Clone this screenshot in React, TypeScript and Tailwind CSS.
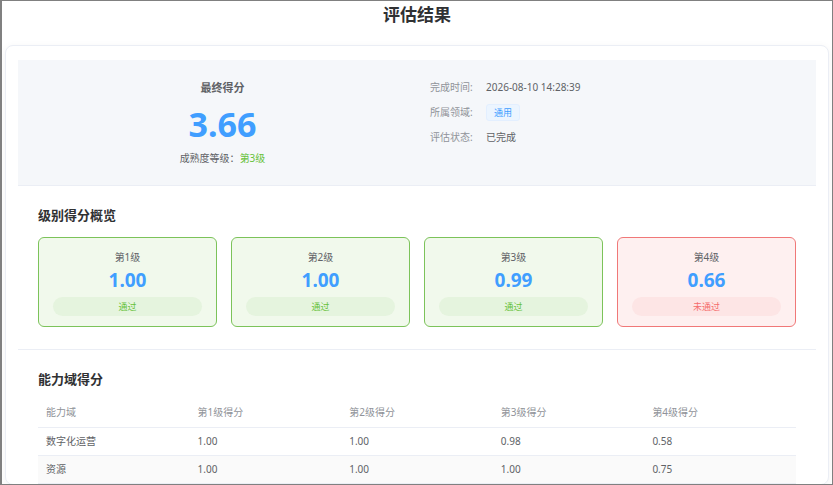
import React from 'react';

const FONT = '"Noto Sans", "Noto Sans CJK SC", sans-serif';

const LEVELS = [
  { name: '第1级', score: '1.00', pass: true },
  { name: '第2级', score: '1.00', pass: true },
  { name: '第3级', score: '0.99', pass: true },
  { name: '第4级', score: '0.66', pass: false },
];

const ROWS = [
  { domain: '数字化运营', s: ['1.00', '1.00', '0.98', '0.58'] },
  { domain: '资源', s: ['1.00', '1.00', '1.00', '0.75'] },
];

function InfoRow({ label, children }: { label: string; children: React.ReactNode }) {
  return (
    <div className="flex h-[25px] items-center">
      <span className="w-[56px] text-[10px] text-[#909399]">{label}</span>
      {children}
    </div>
  );
}

function LevelCard({ name, score, pass }: { name: string; score: string; pass: boolean }) {
  return (
    <div
      className={
        pass
          ? 'rounded-md border-[1.5px] border-[#7cc35a] bg-[#f1f9ec] px-[14px] pt-[12px] pb-[10px] text-center'
          : 'rounded-md border-[1.5px] border-[#f07878] bg-[#fef0f0] px-[14px] pt-[12px] pb-[10px] text-center'
      }
    >
      <div className="text-[10px] leading-[14px] text-[#606266]">{name}</div>
      <div className="mt-[4px] text-[19px] font-bold leading-[24px] text-[#409eff]">{score}</div>
      <div
        className={
          pass
            ? 'mt-[5px] h-[19px] rounded-full bg-[#e5f4de] text-[9px] leading-[19px] text-[#67c23a]'
            : 'mt-[5px] h-[19px] rounded-full bg-[#fde5e5] text-[9px] leading-[19px] text-[#f56c6c]'
        }
      >
        {pass ? '通过' : '未通过'}
      </div>
    </div>
  );
}

export default function App() {
  return (
    <div
      className="h-[485px] w-[833px] overflow-hidden border border-l-2 border-[#808080] bg-white"
      style={{ fontFamily: FONT }}
    >
      <div className="flex h-[44px] justify-center pt-[2px]">
        <h1 className="text-[17px] font-bold leading-[24px] text-[#303133]">评估结果</h1>
      </div>

      <div className="ml-[3px] w-[824px] rounded-lg border border-[#ebeef5] bg-white px-3 pt-[14px] shadow-[0_2px_8px_rgba(0,0,0,0.05)]">
        {/* summary */}
        <div className="grid h-[126px] grid-cols-2 gap-5 border-b border-[#ebeef5] bg-[#f5f7fa] px-5">
          <div className="flex flex-col items-center pt-[20px]">
            <div className="text-[11px] font-semibold leading-[16px] text-[#606266]">最终得分</div>
            <div className="mt-[10px] text-[34px] font-bold leading-[36px] text-[#409eff]">3.66</div>
            <div className="mt-[9px] text-[10px] leading-[14px] text-[#606266]">
              成熟度等级：<span className="text-[#67c23a]">第3级</span>
            </div>
          </div>
          <div className="pt-[15px] pl-[3px]">
            <InfoRow label="完成时间:">
              <span className="text-[10px] text-[#606266]">2026-08-10 14:28:39</span>
            </InfoRow>
            <InfoRow label="所属领域:">
              <span className="rounded-[3px] border border-[#e3efff] bg-[#ecf5ff] px-[7px] text-[9px] leading-[15px] text-[#409eff]">
                通用
              </span>
            </InfoRow>
            <InfoRow label="评估状态:">
              <span className="text-[10px] text-[#606266]">已完成</span>
            </InfoRow>
          </div>
        </div>

        {/* level overview */}
        <div className="border-b border-[#ebeef5] px-5 pt-[20px] pb-[22px]">
          <h2 className="mb-[13px] text-[13px] font-bold leading-[18px] text-[#303133]">级别得分概览</h2>
          <div className="grid grid-cols-4 gap-[14px]">
            {LEVELS.map((l) => (
              <LevelCard key={l.name} {...l} />
            ))}
          </div>
        </div>

        {/* domain scores */}
        <div className="px-5 pt-[20px]">
          <h2 className="mb-[11px] text-[13px] font-bold leading-[18px] text-[#303133]">能力域得分</h2>
          <table className="w-full table-fixed text-left text-[10px]">
            <thead>
              <tr className="h-[28px] border-b border-[#ebeef5] text-[#909399]">
                <th className="pl-2 font-normal">能力域</th>
                <th className="pl-2 font-normal">第1级得分</th>
                <th className="pl-2 font-normal">第2级得分</th>
                <th className="pl-2 font-normal">第3级得分</th>
                <th className="pl-2 font-normal">第4级得分</th>
              </tr>
            </thead>
            <tbody className="text-[#606266]">
              {ROWS.map((r, i) => (
                <tr
                  key={r.domain}
                  className={i % 2 === 1 ? 'h-[28px] border-b border-[#ebeef5] bg-[#fafafa]' : 'h-[28px] border-b border-[#ebeef5]'}
                >
                  <td className="pl-2">{r.domain}</td>
                  {r.s.map((v, j) => (
                    <td key={j} className="pl-2">
                      {v}
                    </td>
                  ))}
                </tr>
              ))}
            </tbody>
          </table>
        </div>
      </div>
    </div>
  );
}
